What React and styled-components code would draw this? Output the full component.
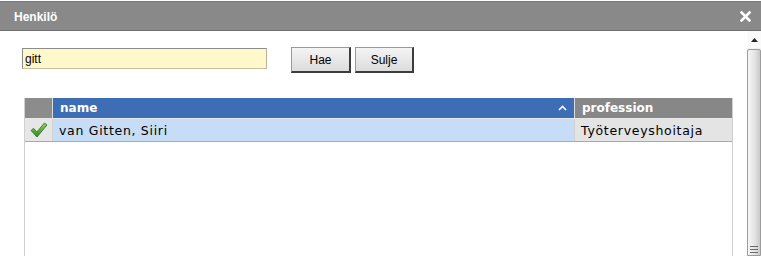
import React from "react";
import styled, { createGlobalStyle } from "styled-components";

const GlobalStyle = createGlobalStyle`
  html, body {
    margin: 0;
    padding: 0;
    background: #ffffff;
  }
`;

const Dialog = styled.div`
  width: 761px;
  height: 256px;
  display: flex;
  flex-direction: column;
  overflow: hidden;
  background: #fff;
  font-family: "Liberation Sans", Arial, sans-serif;
`;

const TitleBar = styled.div`
  height: 28px;
  margin-top: 1px;
  display: flex;
  align-items: center;
  justify-content: space-between;
  padding: 0 10px 0 14px;
  background: #898989;
  border-top: 1px solid #7a7a7a;
  border-bottom: 1px solid #6e6e6e;
  color: #fff;
`;

const Title = styled.span`
  font-size: 12px;
  font-weight: bold;
  padding-top: 1px;
`;

const Body = styled.div`
  flex: 1;
  display: flex;
  min-height: 0;
`;

const Content = styled.div`
  flex: 1;
  padding: 17px 0 0 22px;
  display: flex;
  flex-direction: column;
`;

const SearchRow = styled.div`
  display: flex;
  align-items: flex-start;
`;

const SearchInput = styled.input`
  box-sizing: border-box;
  width: 245px;
  height: 21px;
  margin: 0;
  padding: 0 2px;
  background: #fff8ca;
  border: 1px solid #8d8d8d;
  border-bottom-color: #c9c2a0;
  border-right-color: #b9b39a;
  font-family: "Liberation Sans", Arial, sans-serif;
  font-size: 12px;
  color: #000;
  outline: none;
`;

const Buttons = styled.div`
  display: flex;
  gap: 4px;
  margin-left: 24px;
  margin-top: -1px;
`;

const Button = styled.button`
  box-sizing: border-box;
  width: ${({ $w }) => $w}px;
  height: 26px;
  margin: 0;
  padding: 0;
  background: linear-gradient(#f4f4f4, #dcdcdc);
  border: 1px solid #9a9a9a;
  border-right: 2px solid #3c3c3c;
  border-bottom: 2px solid #3c3c3c;
  font-family: "Liberation Sans", Arial, sans-serif;
  font-size: 12px;
  color: #000;
`;

const Table = styled.div`
  margin: 25px 0 0 2px;
  width: 709px;
  flex: 1;
  box-sizing: border-box;
  border-left: 1px solid #d0d0d0;
  border-right: 1px solid #d0d0d0;
  font-family: "DejaVu Sans", Verdana, sans-serif;
`;

const Row = styled.div`
  display: grid;
  grid-template-columns: 27px 521px 1fr;
  column-gap: 1px;
  height: ${({ $h }) => $h}px;
  border-bottom: 1px solid ${({ $line }) => $line};
  background: ${({ $gap }) => $gap};
`;

const HeadCell = styled.div`
  display: flex;
  align-items: center;
  justify-content: space-between;
  padding: 0 7px;
  background: ${({ $bg }) => $bg};
  color: #fff;
  font-weight: bold;
  font-size: 12px;
`;

const Cell = styled.div`
  display: flex;
  align-items: center;
  justify-content: ${({ $center }) => ($center ? "center" : "flex-start")};
  padding: ${({ $center }) => ($center ? "0" : "0 6px")};
  background: ${({ $bg }) => $bg};
  color: #000;
  font-size: 12.5px;
  letter-spacing: 0.7px;
`;

const Scrollbar = styled.div`
  width: 14px;
  margin-left: 13px;
  display: flex;
  flex-direction: column;
  background: #f2f2f2;
`;

const ScrollButton = styled.div`
  height: 17px;
  display: flex;
  align-items: center;
  justify-content: center;
  background: #fafafa;
`;

const Thumb = styled.div`
  flex: 1;
  margin-top: 1px;
  box-sizing: border-box;
  border: 1px solid #9c9c9c;
  border-radius: 2px 2px 0 0;
  background: linear-gradient(90deg, #f6f6f6, #e2e2e2 60%, #c8c8c8);
  display: flex;
  align-items: flex-end;
  justify-content: center;
  padding-bottom: 2px;
`;

const CloseIcon = () => (
  <svg width="11" height="11" viewBox="0 0 11 11">
    <path d="M1.5 1.5 9.5 9.5M9.5 1.5 1.5 9.5" stroke="#fff" strokeWidth="2.6" strokeLinecap="square" />
  </svg>
);

const SortIcon = () => (
  <svg width="9" height="6" viewBox="0 0 9 6">
    <path d="M1 5 4.5 1.5 8 5" fill="none" stroke="#fff" strokeWidth="1.6" />
  </svg>
);

const CheckIcon = () => (
  <svg width="18" height="16" viewBox="0 0 18 16">
    <defs>
      <linearGradient id="chk" x1="0" y1="0" x2="0" y2="1">
        <stop offset="0" stopColor="#8fd46a" />
        <stop offset="1" stopColor="#2f8a1c" />
      </linearGradient>
    </defs>
    <path
      d="M1 8.5 3.6 6.3 6.8 10 14.5 1 17 3 7 15 Z"
      fill="url(#chk)"
      stroke="#2a6e18"
      strokeWidth="0.8"
      strokeLinejoin="round"
    />
  </svg>
);

const UpArrow = () => (
  <svg width="7" height="4" viewBox="0 0 7 4">
    <path d="M0 4 3.5 0 7 4Z" fill="#222" />
  </svg>
);

const Grip = () => (
  <svg width="8" height="7" viewBox="0 0 8 7">
    <path d="M0 0.5H8M0 3.5H8M0 6.5H8" stroke="#6a6a6a" strokeWidth="1" />
  </svg>
);

export default function App() {
  return (
    <>
      <GlobalStyle />
      <Dialog>
        <TitleBar>
          <Title>Henkilö</Title>
          <CloseIcon />
        </TitleBar>
        <Body>
          <Content>
            <SearchRow>
              <SearchInput defaultValue="gitt" />
              <Buttons>
                <Button $w={60}>Hae</Button>
                <Button $w={59}>Sulje</Button>
              </Buttons>
            </SearchRow>
            <Table>
              <Row $h={20} $line="#e8e8e8" $gap="#dcdcdc">
                <HeadCell $bg="#8c8c8c" />
                <HeadCell $bg="#3d6db4">
                  name
                  <SortIcon />
                </HeadCell>
                <HeadCell $bg="#878787">profession</HeadCell>
              </Row>
              <Row $h={22} $line="#a9a9a9" $gap="#d2d2d2">
                <Cell $bg="#e6e6e6" $center>
                  <CheckIcon />
                </Cell>
                <Cell $bg="#c7ddf7">van Gitten, Siiri</Cell>
                <Cell $bg="#e4e4e4">Työterveyshoitaja</Cell>
              </Row>
            </Table>
          </Content>
          <Scrollbar>
            <ScrollButton>
              <UpArrow />
            </ScrollButton>
            <Thumb>
              <Grip />
            </Thumb>
          </Scrollbar>
        </Body>
      </Dialog>
    </>
  );
}
